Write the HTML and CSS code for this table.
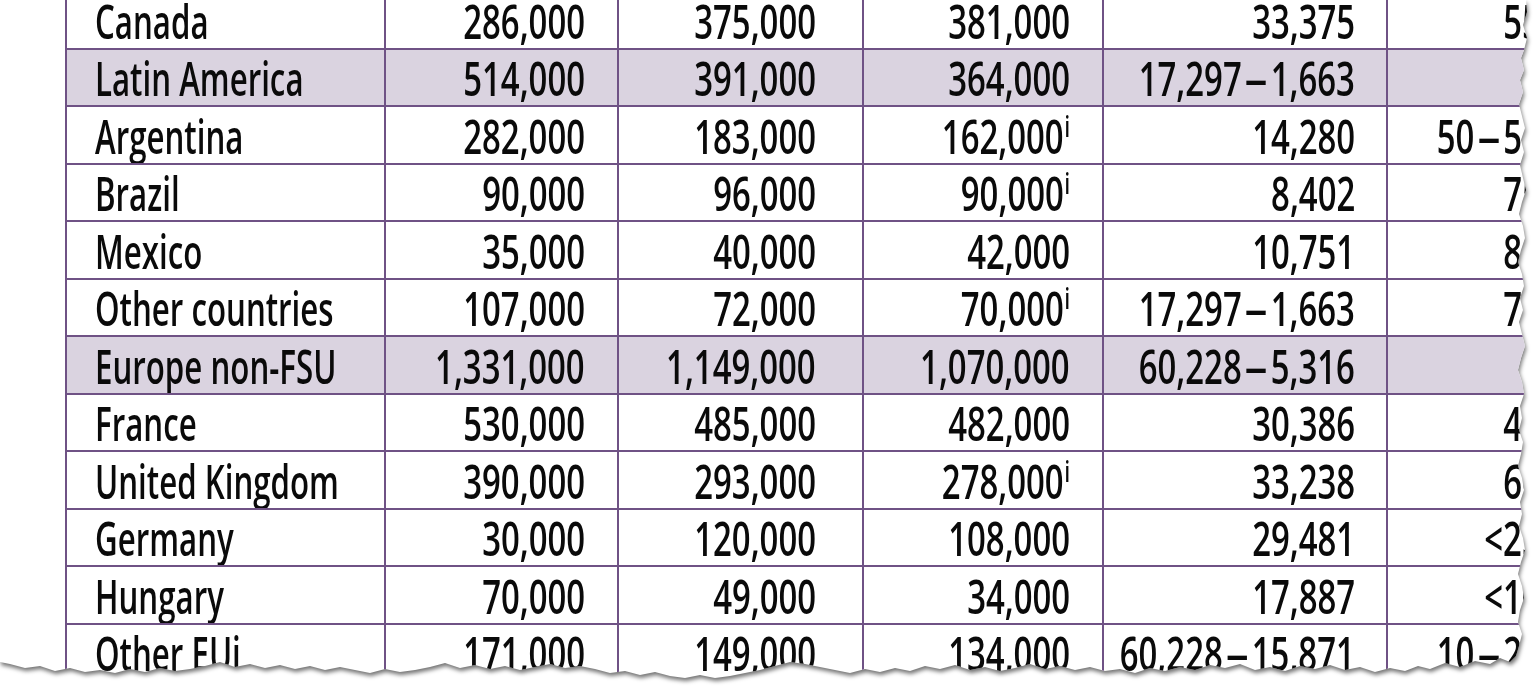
FILE: index.html
```html
<!DOCTYPE html>
<html lang="en">
<head>
<meta charset="utf-8">
<title>Table excerpt</title>
<link rel="stylesheet" href="styles.css">
</head>
<body>
<div class="stage">
  <div class="shadow">
    <div class="paper">
      <table class="data">
        <colgroup>
          <col class="c1"><col class="c2"><col class="c3"><col class="c4"><col class="c5"><col class="c6">
        </colgroup>
        <tbody>
          <tr><td class="name"><div class="cell"><span class="t">Canada</span></div></td><td><div class="cell"><span class="t">286,000</span></div></td><td><div class="cell"><span class="t">375,000</span></div></td><td><div class="cell"><span class="t">381,000</span></div></td><td><div class="cell"><span class="t">33,375</span></div></td><td><div class="cell"><span class="t">55</span></div></td></tr>
          <tr class="group"><td class="name"><div class="cell"><span class="t">Latin America</span></div></td><td><div class="cell"><span class="t">514,000</span></div></td><td><div class="cell"><span class="t">391,000</span></div></td><td><div class="cell"><span class="t">364,000</span></div></td><td><div class="cell"><span class="t">17,297<span class="dash">–</span>1,663</span></div></td><td><div class="cell"></div></td></tr>
          <tr><td class="name"><div class="cell"><span class="t">Argentina</span></div></td><td><div class="cell"><span class="t">282,000</span></div></td><td><div class="cell"><span class="t">183,000</span></div></td><td><div class="cell"><span class="t">162,000<sup>i</sup></span></div></td><td><div class="cell"><span class="t">14,280</span></div></td><td><div class="cell"><span class="t">50<span class="dash">–</span>55</span></div></td></tr>
          <tr><td class="name"><div class="cell"><span class="t">Brazil</span></div></td><td><div class="cell"><span class="t">90,000</span></div></td><td><div class="cell"><span class="t">96,000</span></div></td><td><div class="cell"><span class="t">90,000<sup>i</sup></span></div></td><td><div class="cell"><span class="t">8,402</span></div></td><td><div class="cell"><span class="t">75</span></div></td></tr>
          <tr><td class="name"><div class="cell"><span class="t">Mexico</span></div></td><td><div class="cell"><span class="t">35,000</span></div></td><td><div class="cell"><span class="t">40,000</span></div></td><td><div class="cell"><span class="t">42,000</span></div></td><td><div class="cell"><span class="t">10,751</span></div></td><td><div class="cell"><span class="t">80</span></div></td></tr>
          <tr><td class="name"><div class="cell"><span class="t">Other countries</span></div></td><td><div class="cell"><span class="t">107,000</span></div></td><td><div class="cell"><span class="t">72,000</span></div></td><td><div class="cell"><span class="t">70,000<sup>i</sup></span></div></td><td><div class="cell"><span class="t">17,297<span class="dash">–</span>1,663</span></div></td><td><div class="cell"><span class="t">70</span></div></td></tr>
          <tr class="group"><td class="name"><div class="cell"><span class="t">Europe non-FSU</span></div></td><td><div class="cell"><span class="t">1,331,000</span></div></td><td><div class="cell"><span class="t">1,149,000</span></div></td><td><div class="cell"><span class="t">1,070,000</span></div></td><td><div class="cell"><span class="t">60,228<span class="dash">–</span>5,316</span></div></td><td><div class="cell"></div></td></tr>
          <tr><td class="name"><div class="cell"><span class="t">France</span></div></td><td><div class="cell"><span class="t">530,000</span></div></td><td><div class="cell"><span class="t">485,000</span></div></td><td><div class="cell"><span class="t">482,000</span></div></td><td><div class="cell"><span class="t">30,386</span></div></td><td><div class="cell"><span class="t">45</span></div></td></tr>
          <tr><td class="name"><div class="cell"><span class="t">United Kingdom</span></div></td><td><div class="cell"><span class="t">390,000</span></div></td><td><div class="cell"><span class="t">293,000</span></div></td><td><div class="cell"><span class="t">278,000<sup>i</sup></span></div></td><td><div class="cell"><span class="t">33,238</span></div></td><td><div class="cell"><span class="t">60</span></div></td></tr>
          <tr><td class="name"><div class="cell"><span class="t">Germany</span></div></td><td><div class="cell"><span class="t">30,000</span></div></td><td><div class="cell"><span class="t">120,000</span></div></td><td><div class="cell"><span class="t">108,000</span></div></td><td><div class="cell"><span class="t">29,481</span></div></td><td><div class="cell"><span class="t">&lt;25</span></div></td></tr>
          <tr><td class="name"><div class="cell"><span class="t">Hungary</span></div></td><td><div class="cell"><span class="t">70,000</span></div></td><td><div class="cell"><span class="t">49,000</span></div></td><td><div class="cell"><span class="t">34,000</span></div></td><td><div class="cell"><span class="t">17,887</span></div></td><td><div class="cell"><span class="t">&lt;10</span></div></td></tr>
          <tr><td class="name"><div class="cell"><span class="t">Other EUj</span></div></td><td><div class="cell"><span class="t">171,000</span></div></td><td><div class="cell"><span class="t">149,000</span></div></td><td><div class="cell"><span class="t">134,000</span></div></td><td><div class="cell"><span class="t">60,228<span class="dash">–</span>15,871</span></div></td><td><div class="cell"><span class="t">10<span class="dash">–</span>20</span></div></td></tr>
        </tbody>
      </table>
    </div>
  </div>
</div>
</body>
</html>
```
FILE: styles.css
```css
html, body {
  margin: 0;
  padding: 0;
  background: #ffffff;
}

.stage {
  width: 1536px;
  height: 686px;
  overflow: hidden;
}

.shadow {
  filter: drop-shadow(1px 3px 2px rgba(0, 0, 0, 0.55));
}

.paper {
  width: 1536px;
  height: 686px;
  box-sizing: border-box;
  padding-left: 65px;
  background: #ffffff;
  overflow: hidden;
  clip-path: polygon(
    0 0, 1526px 0, 1527px 12px, 1523px 25px, 1527px 38px, 1524px 50px, 1521px 58px, 1524px 70px, 1520px 80px,
    1523px 92px, 1519px 104px, 1522px 116px, 1525px 128px, 1521px 140px, 1524px 152px, 1520px 165px, 1523px 178px,
    1526px 190px, 1522px 202px, 1519px 214px, 1523px 226px, 1525px 238px, 1521px 250px, 1518px 262px, 1522px 274px,
    1524px 286px, 1520px 298px, 1523px 310px, 1519px 322px, 1522px 334px, 1525px 346px, 1521px 358px, 1518px 370px,
    1522px 382px, 1524px 394px, 1520px 406px, 1522px 418px, 1519px 430px, 1523px 442px, 1521px 454px, 1518px 466px,
    1522px 478px, 1524px 490px, 1520px 502px, 1522px 514px, 1519px 526px, 1523px 538px, 1525px 550px, 1521px 562px,
    1518px 574px, 1522px 586px, 1524px 598px, 1520px 610px, 1518px 622px, 1522px 634px, 1519px 646px, 1516px 656px,
    1510px 662px, 1500px 658px, 1490px 664px, 1475px 661px, 1460px 667px, 1445px 663px, 1430px 669px, 1418px 666px,
    1405px 671px, 1390px 668px, 1375px 672px, 1360px 667px, 1345px 670px, 1330px 665px, 1315px 669px, 1300px 666px,
    1285px 671px, 1270px 667px, 1255px 670px, 1240px 664px, 1225px 668px, 1210px 665px, 1195px 670px, 1180px 667px,
    1165px 671px, 1150px 668px, 1135px 673px, 1120px 669px, 1105px 671px, 1090px 667px, 1075px 670px, 1060px 666px,
    1045px 669px, 1030px 664px, 1015px 668px, 1000px 671px, 985px 667px, 970px 670px, 955px 665px, 940px 669px,
    925px 666px, 910px 671px, 895px 668px, 880px 672px, 865px 669px, 850px 673px, 835px 670px, 820px 667px,
    805px 664px, 790px 662px, 775px 666px, 760px 670px, 745px 673px, 730px 676px, 715px 678px, 700px 675px,
    685px 678px, 670px 676px, 655px 672px, 640px 675px, 625px 671px, 610px 673px, 595px 669px, 580px 666px,
    565px 668px, 550px 664px, 535px 667px, 520px 670px, 505px 666px, 490px 669px, 475px 665px, 460px 668px,
    445px 663px, 430px 667px, 415px 670px, 400px 672px, 385px 669px, 370px 673px, 355px 670px, 340px 667px,
    325px 670px, 310px 666px, 295px 669px, 280px 665px, 265px 668px, 250px 664px, 235px 667px, 220px 662px,
    205px 666px, 190px 669px, 175px 671px, 160px 668px, 145px 672px, 130px 669px, 115px 673px, 100px 670px,
    85px 672px, 70px 668px, 55px 671px, 40px 666px, 25px 668px, 10px 664px, 0 662px
  );
}

.data {
  border-collapse: collapse;
  table-layout: fixed;
  width: 1521px;
  margin-top: -10px;
  font-family: "Open Sans", "Noto Sans", "DejaVu Sans", sans-serif;
  font-weight: 600;
  font-size: 47px;
  color: #0a0a0a;
}

.c1 { width: 319px; }
.c2 { width: 233px; }
.c3 { width: 245px; }
.c4 { width: 240px; }
.c5 { width: 284px; }
.c6 { width: 200px; }

.data tr {
  height: 57.5px;
}

.data td {
  border: 2px solid #6f5285;
  padding: 2px 32px 0 0;
  overflow: hidden;
}

.cell {
  display: flex;
  justify-content: flex-end;
  height: 52px;
  align-items: center;
  white-space: nowrap;
}

.t {
  display: block;
  flex-shrink: 0;
  line-height: 52px;
  transform: scaleX(0.7);
  transform-origin: right center;
}

.dash {
  display: inline-block;
  margin: 0 9px;
  transform: scaleX(1.4);
}

.data td.name {
  padding-left: 28px;
  padding-right: 0;
}

.data td.name .cell {
  justify-content: flex-start;
}

.data td.name .t {
  transform: scaleX(0.665);
  transform-origin: left center;
}

.data td:nth-child(3) {
  padding-right: 46px;
}

.data td:nth-child(5) {
  padding-right: 31px;
}

.data td:nth-child(6) {
  padding-right: 45px;
}

.data tr.group td {
  background: #dad3e0;
}

.data sup {
  font-size: 0.6em;
  line-height: 0;
  vertical-align: 0.6em;
  margin-left: 1px;
}
```
